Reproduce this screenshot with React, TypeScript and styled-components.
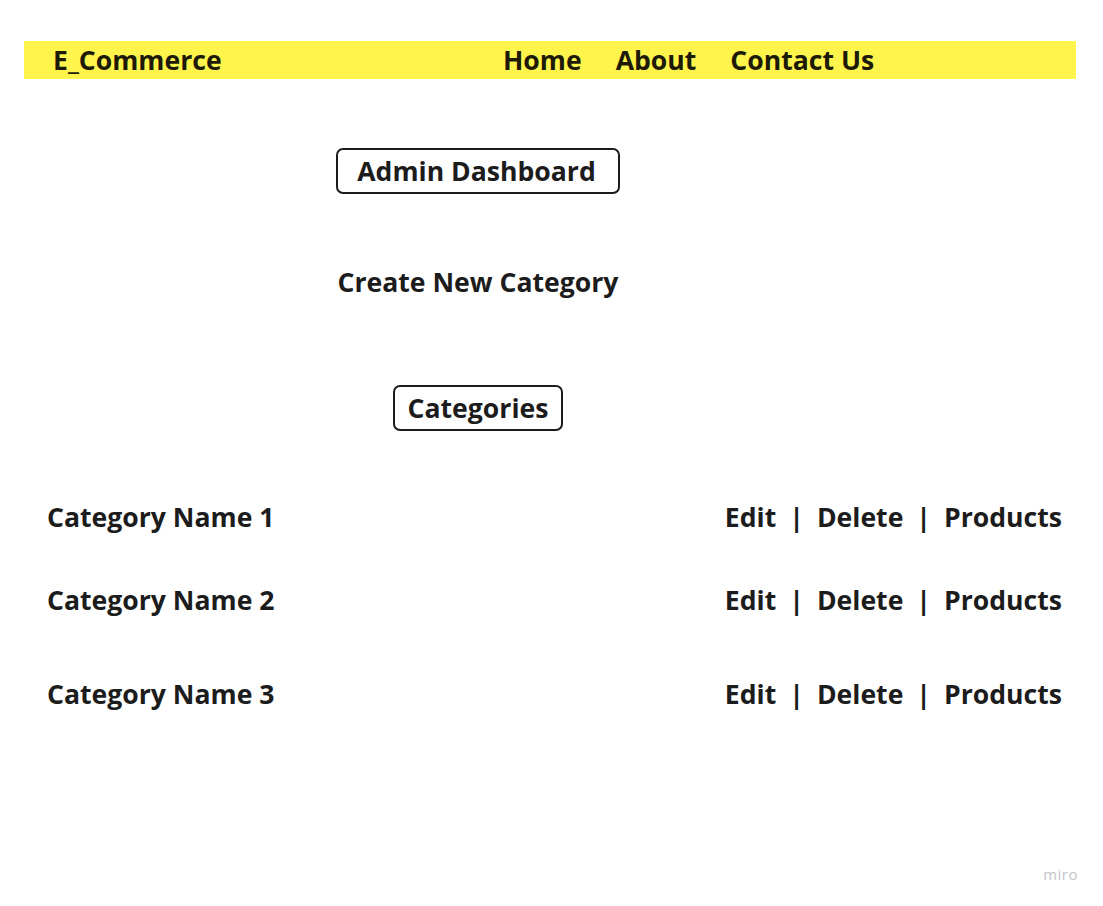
import React from 'react';
import styled, { createGlobalStyle } from 'styled-components';

const GlobalStyle = createGlobalStyle`
  html, body {
    margin: 0;
    padding: 0;
    background: #ffffff;
  }
  body {
    font-family: 'Open Sans', 'Noto Sans', sans-serif;
    color: #1c1c1c;
  }
`;

const Page = styled.div`
  position: relative;
  width: 1103px;
  height: 906px;
  padding: 41px 27px 0 24px;
  box-sizing: border-box;
`;

const Header = styled.header`
  display: flex;
  align-items: center;
  height: 38px;
  background: #fff44b;
  padding-left: 29px;
`;

const Brand = styled.div`
  font-size: 26.6px;
  font-weight: 700;
  width: 450px;
  color: #1d1a08;
`;

const Nav = styled.nav`
  display: flex;
  gap: 34px;
`;

const NavLink = styled.a`
  font-size: 26.6px;
  font-weight: 700;
  color: #1d1a08;
  text-decoration: none;
`;

const Main = styled.main`
  width: 908px;
  display: flex;
  flex-direction: column;
  align-items: center;
`;

const Boxed = styled.div<{ $top: number; $padL: number; $padR: number }>`
  margin-top: ${({ $top }) => $top}px;
  border: 2px solid #1c1c1c;
  border-radius: 7px;
  height: 46px;
  box-sizing: border-box;
  padding: 0 ${({ $padR }) => $padR}px 0 ${({ $padL }) => $padL}px;
  display: flex;
  align-items: center;
  font-size: 26.6px;
  font-weight: 700;
`;

const Heading = styled.div`
  margin-top: 70px;
  font-size: 26.6px;
  font-weight: 700;
  line-height: 36px;
`;

const List = styled.div`
  display: flex;
  flex-direction: column;
  padding: 0 14px 0 23px;
  margin-top: 68px;
`;

const Row = styled.div<{ $top: number }>`
  display: flex;
  justify-content: space-between;
  align-items: center;
  height: 36px;
  margin-top: ${({ $top }) => $top}px;
  font-size: 26.6px;
  font-weight: 700;
`;

const Actions = styled.div`
  display: flex;
  gap: 13px;
`;

const Watermark = styled.div`
  position: absolute;
  right: 25px;
  bottom: 22px;
  font-size: 15px;
  color: #c4c4c8;
  letter-spacing: 0.5px;
`;

const rows = [
  { name: 'Category Name 1', top: 0 },
  { name: 'Category Name 2', top: 47 },
  { name: 'Category Name 3', top: 58 },
];

export default function App() {
  return (
    <>
      <GlobalStyle />
      <Page>
        <Header>
          <Brand>E_Commerce</Brand>
          <Nav>
            <NavLink>Home</NavLink>
            <NavLink>About</NavLink>
            <NavLink>Contact Us</NavLink>
          </Nav>
        </Header>
        <Main>
          <Boxed $top={69} $padL={19} $padR={22}>Admin Dashboard</Boxed>
          <Heading>Create New Category</Heading>
          <Boxed $top={85} $padL={13} $padR={13}>Categories</Boxed>
        </Main>
        <List>
          {rows.map((r) => (
            <Row key={r.name} $top={r.top}>
              <span>{r.name}</span>
              <Actions>
                <span>Edit</span>
                <span>|</span>
                <span>Delete</span>
                <span>|</span>
                <span>Products</span>
              </Actions>
            </Row>
          ))}
        </List>
        <Watermark>miro</Watermark>
      </Page>
    </>
  );
}
